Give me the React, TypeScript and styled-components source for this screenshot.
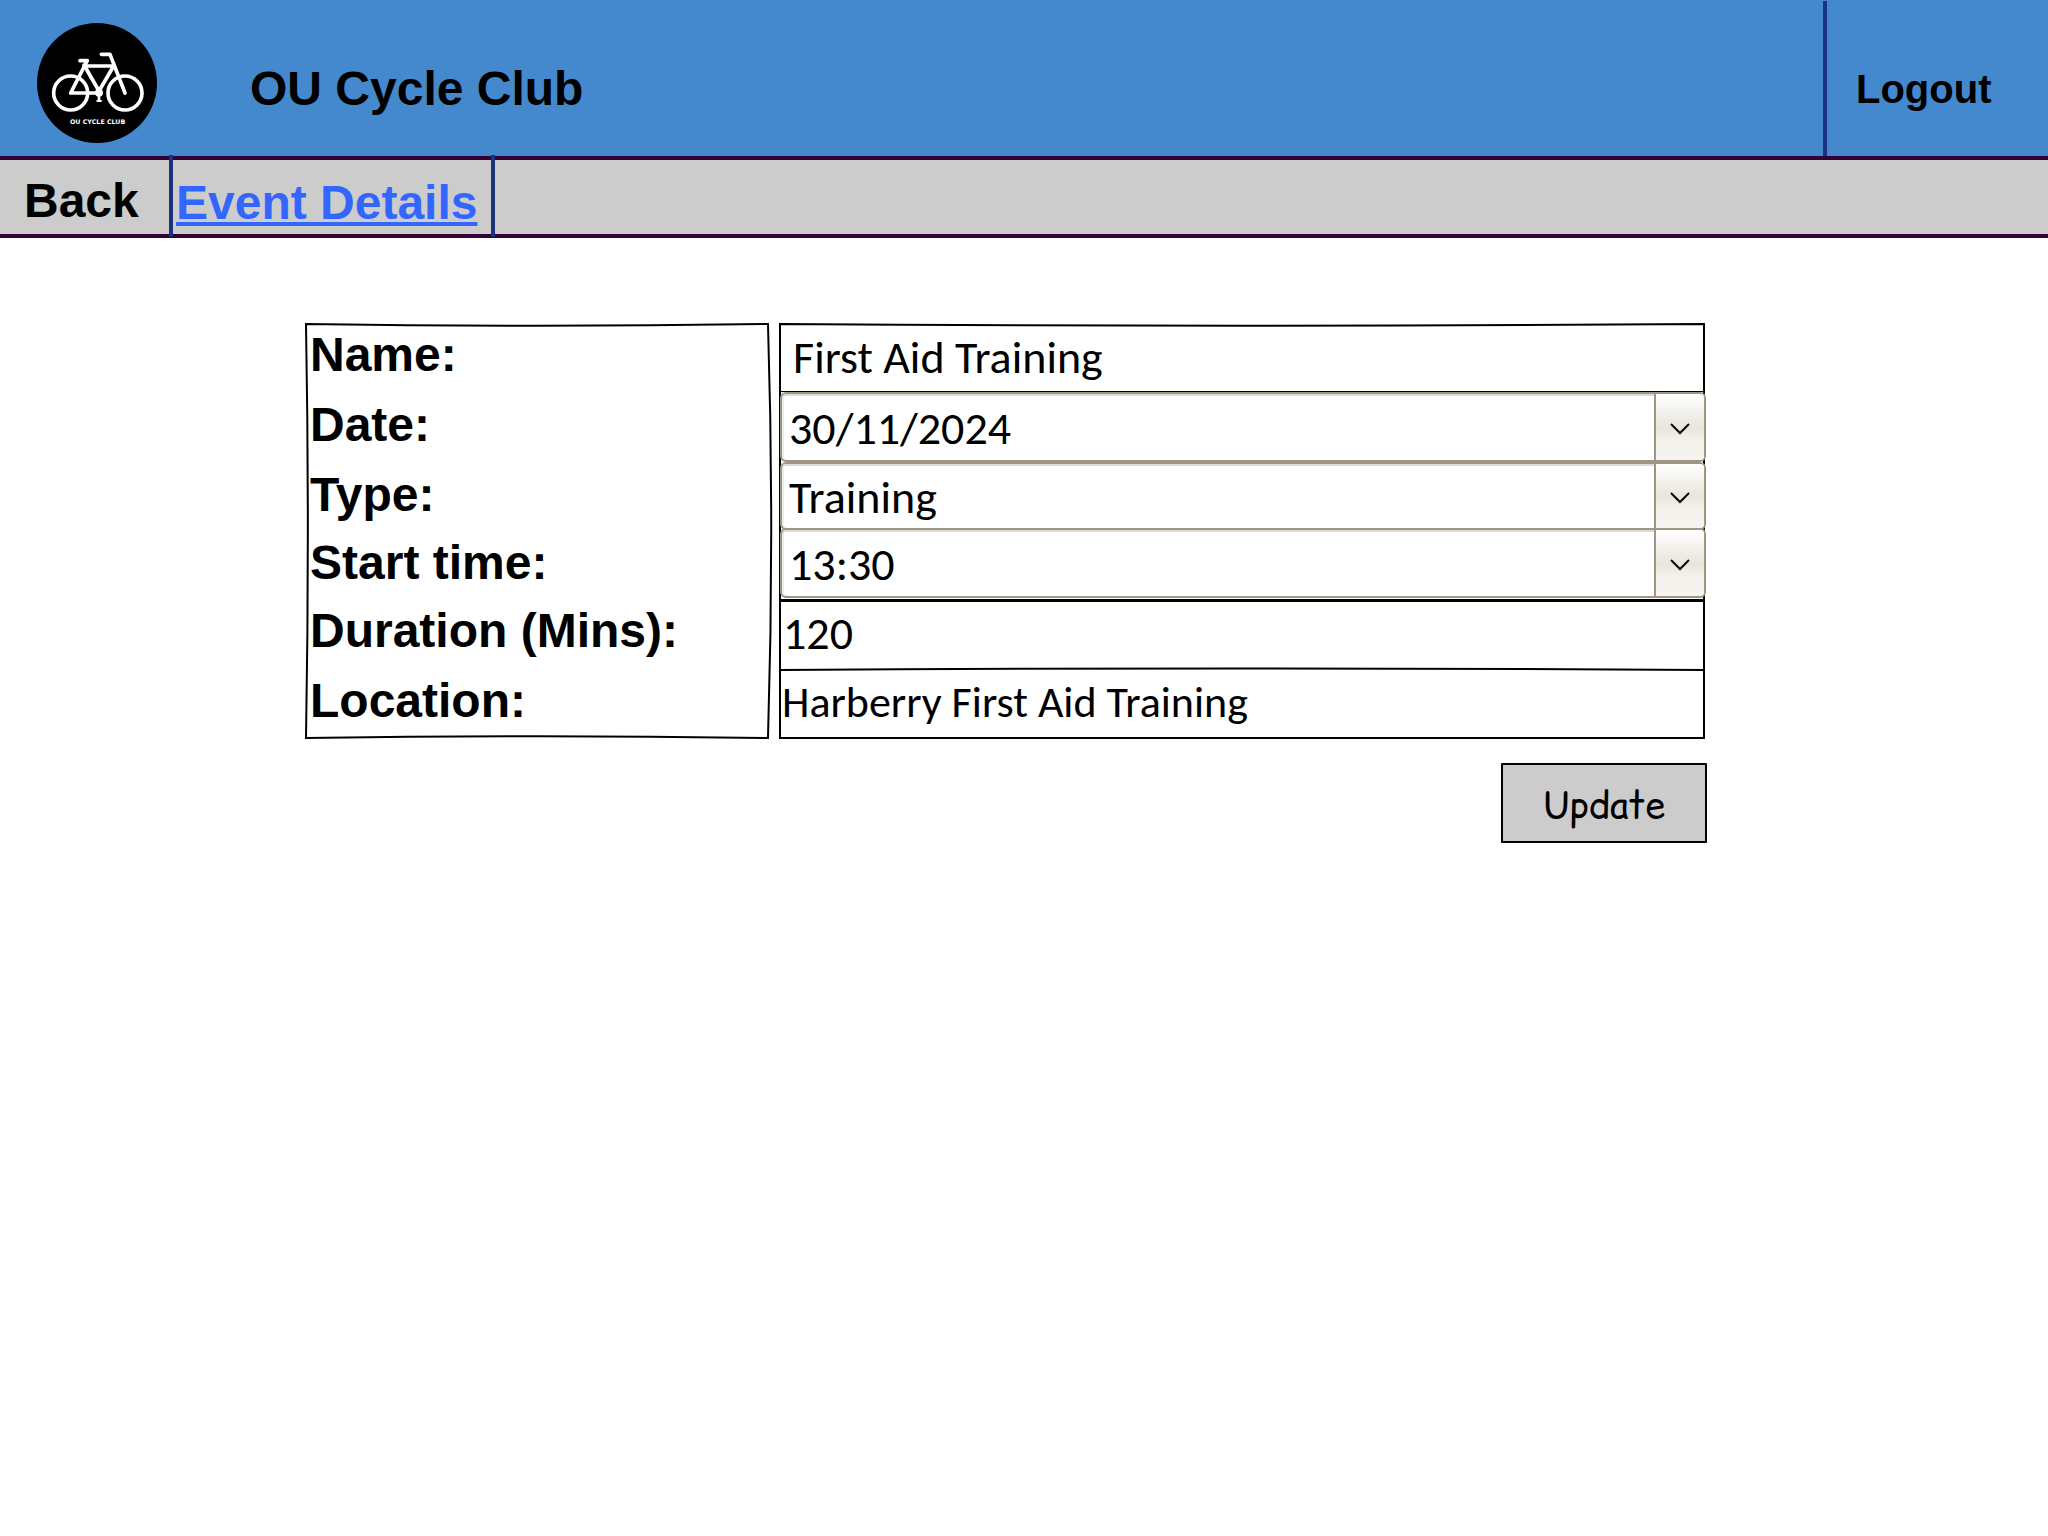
import React from "react";
import styled, { createGlobalStyle } from "styled-components";

const GlobalStyle = createGlobalStyle`
  *, *::before, *::after { box-sizing: border-box; }
  body {
    margin: 0;
    background: #fff;
    color: #000;
    font-family: "Liberation Sans", Arial, sans-serif;
  }
`;

const Header = styled.header`
  display: flex;
  justify-content: space-between;
  background: #4489ce;
  border-bottom: 4px solid #330033;
`;

const Brand = styled.div`
  display: flex;
  align-items: center;
  gap: 93px;
  padding: 23px 0 13px 37px;
`;

const Logo = styled.svg`
  display: block;
  width: 120px;
  height: 120px;
`;

const Title = styled.h1`
  margin: 0;
  padding-top: 12px;
  font-size: 48px;
  line-height: 56px;
`;

const LogoutButton = styled.button`
  width: 225px;
  margin: 1px 0 0;
  padding: 22px 0 0 29px;
  border: 0;
  border-left: 4px solid #1a3380;
  background: none;
  color: inherit;
  font: bold 40px "Liberation Sans", Arial, sans-serif;
  text-align: left;
  cursor: pointer;
`;

const Nav = styled.nav`
  display: flex;
  background: #ccc;
  border-bottom: 4px solid #330033;
`;

const NavLink = styled.a<{ $current?: boolean }>`
  flex: 0 0 ${(p) => (p.$current ? 322 : 173)}px;
  margin: -5px 0 -3px;
  padding: ${(p) => (p.$current ? "20px 0 6px 3px" : "18px 0 8px 24px")};
  border-right: 4px solid #1a3380;
  color: ${(p) => (p.$current ? "#3366ff" : "#000")};
  font-size: 48px;
  font-weight: bold;
  line-height: 56px;
  white-space: nowrap;
  text-decoration: ${(p) => (p.$current ? "underline" : "none")};
  text-decoration-thickness: 4px;
  text-underline-offset: 3px;
  text-decoration-skip-ink: none;
`;

const Form = styled.form`
  display: grid;
  grid-template-columns: 1fr 2fr;
  column-gap: 10px;
  row-gap: 24px;
  padding: 85px 341px 0 305px;
`;

const Labels = styled.div`
  position: relative;
  display: grid;
  grid-template-rows: 70px 70px 68px 68px 70px 70px;
  padding-left: 5px;
`;

const Label = styled.label`
  font-size: 48px;
  font-weight: bold;
  line-height: 64px;
  white-space: nowrap;
`;

const Fields = styled.div`
  position: relative;
  display: flex;
  flex-direction: column;
  margin-right: 2px;
  padding: 0 2px;
`;

const Sketch = styled.svg`
  position: absolute;
  inset: 1px;
  width: calc(100% - 2px);
  height: calc(100% - 2px);
  overflow: visible;
  pointer-events: none;

  path {
    fill: none;
    stroke: #000;
    stroke-width: 2px;
    vector-effect: non-scaling-stroke;
  }
`;

const TextInput = styled.input<{ $size: number; $inset: number }>`
  width: 100%;
  height: 70px;
  margin: 0;
  padding: 0 0 ${(p) => (p.$inset > 2 ? 0 : 5)}px ${(p) => p.$inset}px;
  border: 0;
  background: none;
  color: inherit;
  font: ${(p) => p.$size}px Carlito, Lato, sans-serif;
`;

const NameInput = styled(TextInput)`
  height: 69px;
  border-bottom: 1px solid #000;
`;

const DurationInput = styled(TextInput)`
  margin-top: 1px;
  border-top: 3px solid #000;
`;

const Combo = styled.div<{ $overlap?: boolean; $height: number }>`
  position: relative;
  height: ${(p) => p.$height}px;
  margin: ${(p) => (p.$overlap ? -2 : 0)}px -3px 0 -1px;
`;

const Select = styled.select`
  appearance: none;
  display: block;
  width: 100%;
  height: 100%;
  margin: 0;
  padding: 2px 60px 0 7px;
  border: 2px solid #a09585;
  border-radius: 6px;
  background: #fff;
  box-shadow: inset 0 2px 0 #dcdcdc, inset 2px 0 0 #ececec;
  color: inherit;
  font: 46px Carlito, Lato, sans-serif;
`;

const DropMark = styled.span`
  position: absolute;
  inset: 2px 2px 2px auto;
  width: 50px;
  display: flex;
  align-items: center;
  justify-content: center;
  padding-top: 3px;
  border-left: 2px solid #a09585;
  border-radius: 0 4px 4px 0;
  background: linear-gradient(#fff 0%, #efede7 35%, #e9e5dc 52%, #f3f2ec 70%, #f5f4ef 100%);
  pointer-events: none;
`;

const UpdateButton = styled.button`
  grid-column: 2;
  justify-self: end;
  width: 206px;
  height: 80px;
  padding: 4px 0 0;
  border: 2px solid #000;
  border-radius: 1px;
  background: #ccc;
  color: inherit;
  font: 36px "Comic Relief", "Comic Sans MS", "Comic Neue", Lato, sans-serif;
  cursor: pointer;
`;

function ClubLogo() {
  return (
    <Logo viewBox="22 24 360 360" role="img" aria-label="OU Cycle Club logo">
      <circle cx="202" cy="204" r="180" fill="#000" />
      <g fill="none" stroke="#fff" strokeWidth="11" strokeLinecap="round" strokeLinejoin="round">
        <circle cx="123" cy="234" r="51" />
        <circle cx="286" cy="234" r="51" />
        <path d="M151 137H173L169 144L123 234H206" />
        <path d="M163 150L208 228L252 153H167" />
        <path d="M215 118H241L286 234" />
        <path d="M208 240V256" strokeWidth="8" />
        <path d="M203 258H214" strokeWidth="6" />
      </g>
      <circle cx="208" cy="233" r="12" fill="#fff" />
      <text
        x="204"
        y="327"
        fill="#fff"
        fontFamily="DejaVu Sans, sans-serif"
        fontSize="19"
        fontWeight="bold"
        textAnchor="middle"
      >
        OU CYCLE CLUB
      </text>
    </Logo>
  );
}

function Frame({ lines }: { lines: string[] }) {
  return (
    <Sketch viewBox="0 0 100 100" preserveAspectRatio="none" aria-hidden="true">
      {lines.map((d) => (
        <path key={d} d={d} />
      ))}
    </Sketch>
  );
}

const labelFrame = ["M0 0Q50 0.8 100 0Q101.4 50 100 100Q50 99.2 0 100Q0.8 50 0 0Z"];
const fieldFrame = ["M0 0Q50 0.8 100 0V100H0Z", "M0 83.6Q50 82.8 100 83.6"];

interface DropDownProps {
  id: string;
  options: string[];
  height: number;
  overlap?: boolean;
}

function DropDown({ id, options, height, overlap }: DropDownProps) {
  return (
    <Combo $height={height} $overlap={overlap}>
      <Select id={id} name={id} defaultValue={options[0]}>
        {options.map((o) => (
          <option key={o}>{o}</option>
        ))}
      </Select>
      <DropMark>
        <svg width="20" height="12" viewBox="0 0 20 12" fill="none" stroke="#000" strokeWidth="2">
          <path d="M1 1L10 10L19 1" />
        </svg>
      </DropMark>
    </Combo>
  );
}

export default function App() {
  return (
    <>
      <GlobalStyle />
      <Header>
        <Brand>
          <ClubLogo />
          <Title>OU Cycle Club</Title>
        </Brand>
        <LogoutButton type="button">Logout</LogoutButton>
      </Header>
      <Nav>
        <NavLink href="#back">Back</NavLink>
        <NavLink href="#event" $current aria-current="page">
          Event Details
        </NavLink>
      </Nav>
      <main>
        <Form onSubmit={(e) => e.preventDefault()}>
          <Labels>
            <Frame lines={labelFrame} />
            <Label htmlFor="name">Name:</Label>
            <Label htmlFor="date">Date:</Label>
            <Label htmlFor="type">Type:</Label>
            <Label htmlFor="start">Start time:</Label>
            <Label htmlFor="duration">Duration (Mins):</Label>
            <Label htmlFor="location">Location:</Label>
          </Labels>
          <Fields>
            <Frame lines={fieldFrame} />
            <NameInput id="name" $size={46} $inset={12} defaultValue="First Aid Training" />
            <DropDown id="date" options={["30/11/2024"]} height={70} />
            <DropDown id="type" options={["Training"]} height={68} />
            <DropDown id="start" options={["13:30"]} height={70} overlap />
            <DurationInput id="duration" $size={46} $inset={2} defaultValue="120" />
            <TextInput id="location" $size={44} $inset={1} defaultValue="Harberry First Aid Training" />
          </Fields>
          <UpdateButton type="submit">Update</UpdateButton>
        </Form>
      </main>
    </>
  );
}
